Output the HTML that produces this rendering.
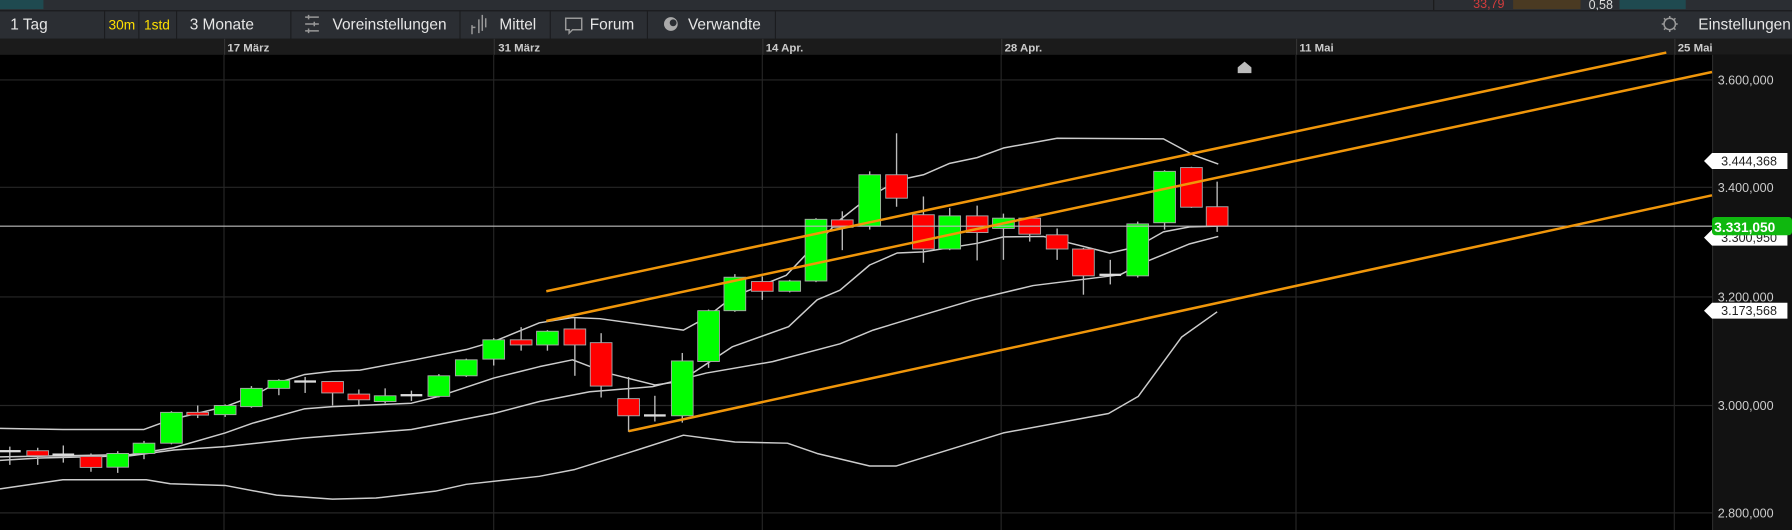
<!DOCTYPE html>
<html><head><meta charset="utf-8"><style>
html,body{margin:0;padding:0;background:#000;overflow:hidden}
svg{display:block}
text{font-family:"Liberation Sans",Arial,sans-serif}
</style></head><body>
<svg id="s" width="1792" height="530" viewBox="0 0 1568 464" preserveAspectRatio="none" xmlns="http://www.w3.org/2000/svg">
<rect x="0" y="0" width="1568" height="464" fill="#000"/>
<rect x="0" y="0" width="1568" height="9" fill="#2b2e33"/>
<rect x="0" y="0" width="38" height="8" fill="#1f4a50"/>
<rect x="1254" y="0" width="1" height="9" fill="#1a1a1a"/>
<text x="1289" y="7" font-size="11" fill="#d23c3c">33,79</text>
<rect x="1324" y="0" width="59" height="8" fill="#4a3a22"/>
<text x="1390" y="8" font-size="11" fill="#ddd">0,58</text>
<rect x="1417" y="0" width="58" height="8" fill="#1f4a50"/>
<rect x="0" y="9" width="1568" height="25" fill="#2b2e33"/>
<rect x="0" y="9" width="1568" height="1" fill="#1b1c1f"/>
<g fill="#1b1c1f">
<rect x="91" y="9" width="1" height="25"/><rect x="121" y="9" width="1" height="25"/><rect x="154" y="9" width="1" height="25"/>
<rect x="254" y="9" width="1" height="25"/><rect x="402" y="9" width="1" height="25"/><rect x="481" y="9" width="1" height="25"/>
<rect x="566" y="9" width="1" height="25"/><rect x="678" y="9" width="1" height="25"/>
</g>
<g font-size="13.5" fill="#e6e6e6">
<text x="9" y="26">1 Tag</text>
<text x="95" y="26" fill="#ffe000" font-size="12">30m</text>
<text x="126" y="26" fill="#ffe000" font-size="12">1std</text>
<text x="166" y="26">3 Monate</text>
<text x="291" y="26">Voreinstellungen</text>
<text x="437" y="26">Mittel</text>
<text x="516" y="26">Forum</text>
<text x="602" y="26">Verwandte</text>
<text x="1486" y="26">Einstellungen</text>
</g>
<g stroke="#999" stroke-width="1.3" fill="none">
<path d="M267 15h12M270 13v4M267 21h12M275 19v4M267 27h12M270 25v4"/>
<path d="M413 22v8M413 24h3M419 17v12M422 13v14M425 16v8"/>
<path d="M495 16h14v10h-8l-3 3v-3h-3z"/>
<circle cx="1461" cy="21" r="5"/>
<path d="M1461 14v2M1461 26v2M1454 21h2M1466 21h2M1456 16l1.5 1.5M1466 16l-1.5 1.5M1456 26l1.5-1.5M1466 26l-1.5-1.5"/>
</g>
<circle cx="587" cy="21" r="6" fill="#aaa"/><circle cx="589" cy="20" r="3" fill="#2b2e33"/>
<rect x="0" y="34" width="1568" height="14" fill="#1b1b1b"/>
<g font-size="10" font-weight="bold" fill="#ccc">
<text x="199" y="45">17 März</text><text x="436" y="45">31 März</text><text x="670" y="45">14 Apr.</text>
<text x="879" y="45">28 Apr.</text><text x="1137" y="45">11 Mai</text><text x="1468" y="45">25 Mai</text>
</g>
<g fill="#333">
<rect x="196" y="34" width="1" height="14"/><rect x="432" y="34" width="1" height="14"/><rect x="667" y="34" width="1" height="14"/>
<rect x="876" y="34" width="1" height="14"/><rect x="1134" y="34" width="1" height="14"/><rect x="1465" y="34" width="1" height="14"/>
</g>
<rect x="1498" y="48" width="70" height="416" fill="#121212"/>
<rect x="1498" y="48" width="1" height="416" fill="#2a2a2a"/>
<g stroke="#262626" stroke-width="1">
<path d="M196 48V464M432 48V464M667 48V464M876 48V464M1134 48V464M1465 48V464"/>
<path d="M0 70H1498M0 164H1498M0 260H1498M0 355H1498M0 449H1498"/>
</g>
<g font-size="11" fill="#ccc">
<text x="1503" y="74">3.600,000</text><text x="1503" y="168">3.400,000</text><text x="1503" y="264">3.200,000</text>
<text x="1503" y="359">3.000,000</text><text x="1503" y="453">2.800,000</text>
</g>
<path d="M1083 64v-5l6-5 6 5v5z" fill="#bbb"/>
<g id="lines" fill="none" stroke-linejoin="round"></g>
<g id="candles"></g>
<rect x="0" y="197.5" width="1498" height="1" fill="#bbb"/>
<g id="orange" stroke="#f0960a" stroke-width="2.2">
<line x1="478" y1="255" x2="1458" y2="46"/>
<line x1="478" y1="281" x2="1498" y2="63"/>
<line x1="550" y1="377.5" x2="1498" y2="171"/>
</g>
<path d="M1491 141l7-7h66v14h-66z" fill="#fff"/>
<text x="1506" y="145" font-size="11" fill="#222">3.444,368</text>
<path d="M1491 208l7-7h66v14h-66z" fill="#fff"/>
<text x="1506" y="212" font-size="11" fill="#222">3.300,950</text>
<rect x="1498" y="190" width="70" height="16" rx="3" fill="#0fb80f"/>
<text x="1500" y="203" font-size="12" font-weight="bold" fill="#fff">3.331,050</text>
<path d="M1491 272l7-7h66v14h-66z" fill="#fff"/>
<text x="1506" y="276" font-size="11" fill="#222">3.173,568</text>
</svg>
<script>
var NS="http://www.w3.org/2000/svg";
var C=[[8.6,395,395,391,407,'d'],[33,394.6,399,392,407,'r'],[55.4,398,398,390,405,'d'],[79.6,399.6,409.2,397,413,'r'],[103,397,409,395,414,'g'],[126,388,397,386,402,'g'],[150,361,388,360,389,'g'],[173,361,363.4,355,366,'r'],[197,355,363,354,365,'g'],[220,340,356,338,357,'g'],[244,333,340,332,346,'g'],[267,334,334,330,344,'d'],[291,334,344,334,355,'r'],[314,345,350,341,355,'r'],[337,346.5,351.5,340,353,'g'],[360,346,346,342,351,'d'],[384,329,347,327.5,348,'g'],[408,315,329,314,330,'g'],[432,297.5,314.4,296,320,'g'],[456,297.5,302,286.4,307,'r'],[479,290,302,289,307,'g'],[503,288,302,278.5,329,'r'],[526,300,338,291.7,348,'r'],[550,349,364,330,378,'r'],[573,363.7,363.7,346.5,369,'d'],[597,316,364,309,370,'g'],[620,272,316.5,271,322,'g'],[643,242.7,272,240,273,'g'],[667,246.5,255,242,262.5,'r'],[691,246,255,245,256,'g'],[714,192,246,191,247,'g'],[737,192.5,199,185,219,'r'],[761,153,198,150,201,'g'],[784.5,153,173.5,116.7,181,'r'],[808,188,218,172,230,'r'],[831,189,218,182,219,'g'],[855,189,203.6,180,228,'r'],[878,191,200,187,227.5,'g'],[901,191,205,189.6,211.5,'r'],[925,205.6,218,200,227.5,'r'],[948,218,241.5,217,258,'r'],[971.5,240.6,240.6,227.5,249,'d'],[995.5,196,241.5,194,243,'g'],[1019,150,195,149,201,'g'],[1042.5,146.7,181.4,146,182,'r'],[1065,181,198,159,203,'r']];
var g=document.getElementById('candles');
function el(t,a){var e=document.createElementNS(NS,t);for(var k in a)e.setAttribute(k,a[k]);g.appendChild(e);return e;}
C.forEach(function(c){
 el('line',{x1:c[0],x2:c[0],y1:c[3],y2:c[4],stroke:'#bbb','stroke-width':1.2});
 if(c[5]=='d'){el('rect',{x:c[0]-9.5,y:c[1]-1,width:19,height:2,fill:'#ddd'});}
 else el('rect',{x:c[0]-9.5,y:c[1],width:19,height:Math.max(2,c[2]-c[1]),fill:c[5]=='g'?'#0f0':'#f00',stroke:'#aaa','stroke-width':0.8});
});
var L=[
"0,375 55,376 126,376 149,367.5 197,356 221,347 242,335.4 266,328 291,325 315,324 363,315 408,306 432,299 472,282.6 501,278 525,279 598,289 618,278 641,260 688,241 706,222 735,192.5 761,172 787,157.5 808,153 831,143 855,138 878,129.6 925,121 1018,121.6 1044,135.6 1066,143.6",
"0,400 114,398 152,392 197,379 221,370.5 266,358 291,356 360,353 384,347 432,331 456,325 472,321 501,315 531,326.5 573,337 595,334 641,303.5 690,286 715,262.5 735,254 761,232 785,221.5 808,220.5 855,213 878,207.4 913,207 971,221.5 995,216 1018,203 1041,198.6 1066,198",
"0,403 35,401 114,399 152,394 197,391 266,383.5 360,376 432,362 472,351.5 516,343 571,338.5 618,326.6 676,316.6 735,301 764,289 808,275.6 852,262.5 904,250 980,240.6 1003,229 1041,213.5 1066,207",
"0,428 55,420 128,420 149,423.5 197,425 242,433.5 291,437 329,436 381,430 408,424 472,417 503,411 548,397 598,381 643,387 689,388 715,397 761,408 784,408 878,379 970,362 996,347 1034,295 1065,273"];
var lg=document.getElementById('lines');
L.forEach(function(p){var e=document.createElementNS(NS,'polyline');e.setAttribute('points',p);e.setAttribute('stroke','#ccc');e.setAttribute('stroke-width','1.3');e.setAttribute('fill','none');lg.appendChild(e);});
</script>
</body></html>
